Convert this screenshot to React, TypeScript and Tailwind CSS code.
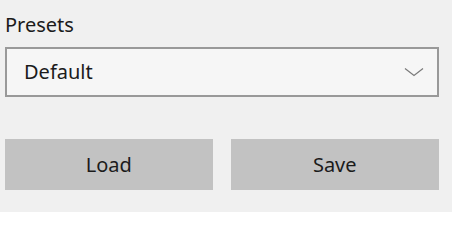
import React from "react";

export default function App() {
  return (
    <div className="w-[452px] h-[212px] bg-[#f0f0f0] text-[#1b1b1b] pl-[5px] pt-[11px]" style={{ fontFamily: '"Noto Sans", "Open Sans", sans-serif' }}>
      <div className="w-[434px]">
        <div className="text-[20px] leading-[28px] h-[36px]">Presets</div>
        <div className="h-[50px] border-2 border-[#999999] bg-[#f6f6f6] flex items-center pl-[17px] pr-[12px]">
          <span className="flex-1 text-[20px] leading-[28px]">Default</span>
          <svg width="20" height="10" viewBox="0 0 20 10" className="mr-[1px]">
            <polyline points="1,1.5 10,8.5 19,1.5" fill="none" stroke="#7a7a7a" strokeWidth="1.2" />
          </svg>
        </div>
        <div className="mt-[42px] flex gap-[18px]">
          <button className="w-[208px] h-[51px] bg-[#c2c2c2] text-[20px] leading-[28px] text-[#1b1b1b]">Load</button>
          <button className="w-[209px] h-[51px] bg-[#c2c2c2] text-[20px] leading-[28px] text-[#1b1b1b]">Save</button>
        </div>
      </div>
    </div>
  );
}
